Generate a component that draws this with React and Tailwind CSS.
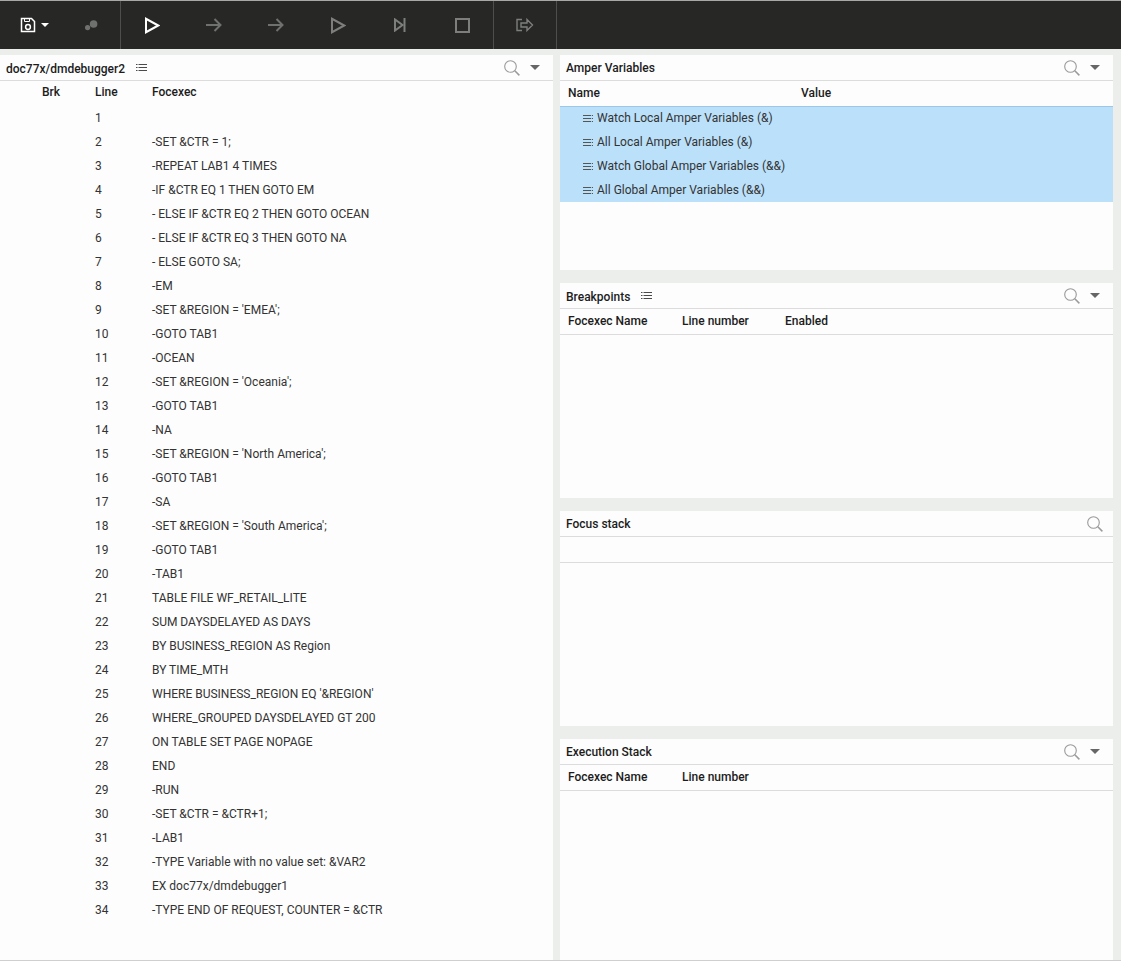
const CODE_LINES = [
  "",
  "-SET &CTR = 1;",
  "-REPEAT LAB1 4 TIMES",
  "-IF &CTR EQ 1 THEN GOTO EM",
  "- ELSE IF &CTR EQ 2 THEN GOTO OCEAN",
  "- ELSE IF &CTR EQ 3 THEN GOTO NA",
  "- ELSE GOTO SA;",
  "-EM",
  "-SET &REGION = 'EMEA';",
  "-GOTO TAB1",
  "-OCEAN",
  "-SET &REGION = 'Oceania';",
  "-GOTO TAB1",
  "-NA",
  "-SET &REGION = 'North America';",
  "-GOTO TAB1",
  "-SA",
  "-SET &REGION = 'South America';",
  "-GOTO TAB1",
  "-TAB1",
  "TABLE FILE WF_RETAIL_LITE",
  "SUM DAYSDELAYED AS DAYS",
  "BY BUSINESS_REGION AS Region",
  "BY TIME_MTH",
  "WHERE BUSINESS_REGION EQ '&REGION'",
  "WHERE_GROUPED DAYSDELAYED GT 200",
  "ON TABLE SET PAGE NOPAGE",
  "END",
  "-RUN",
  "-SET &CTR = &CTR+1;",
  "-LAB1",
  "-TYPE Variable with no value set: &VAR2",
  "EX doc77x/dmdebugger1",
  "-TYPE END OF REQUEST, COUNTER = &CTR",
];

const AMPER_ROWS = [
  "Watch Local Amper Variables (&)",
  "All Local Amper Variables (&)",
  "Watch Global Amper Variables (&&)",
  "All Global Amper Variables (&&)",
];

// ----- ICONS -----
function SaveIcon() {
  return (
    <svg width="16" height="16" viewBox="0 0 16 16" fill="none" stroke="#fff" strokeWidth="1.5">
      <path d="M1.5 1.5h10l3 3v10h-13z" />
      <path d="M4.5 1.5v3h5v-3" strokeWidth="1" />
      <circle cx="8" cy="10" r="2.4" />
    </svg>
  );
}

function DotsIcon() {
  return (
    <svg width="13" height="11" viewBox="0 0 13 11" fill="#6f716f">
      <circle cx="8.6" cy="4" r="3.8" />
      <circle cx="2.6" cy="7.6" r="2.6" />
    </svg>
  );
}

function PlayIcon({ color }) {
  return (
    <svg width="16" height="17" viewBox="0 0 16 17" fill="none" stroke={color} strokeWidth="2">
      <path d="M2 1.8v13.4L14.2 8.5z" strokeLinejoin="miter" />
    </svg>
  );
}

function ArrowIcon() {
  return (
    <svg width="16" height="14" viewBox="0 0 16 14" fill="none" stroke="#6f716f" strokeWidth="2">
      <path d="M0 7h14.5M8.5 1l6 6-6 6" />
    </svg>
  );
}

function StepEndIcon() {
  return (
    <svg width="12" height="14" viewBox="0 0 12 14" fill="none" stroke="#7d7f7d" strokeWidth="2">
      <path d="M1 1.5v11L8.5 7z" />
      <path d="M10.5 0v14" />
    </svg>
  );
}

function StopIcon() {
  return (
    <svg width="15" height="15" viewBox="0 0 15 15" fill="none" stroke="#7d7f7d" strokeWidth="2">
      <rect x="1" y="1" width="13" height="13" />
    </svg>
  );
}

function ExitIcon() {
  return (
    <svg width="18" height="14" viewBox="0 0 18 14" fill="none" stroke="#7d7f7d" strokeWidth="1.4">
      <path d="M6 1.5H1v11h5" />
      <path d="M5 5h6V1.5L16.5 7 11 12.5V9H5z" />
    </svg>
  );
}

function ListIcon() {
  return (
    <svg width="11" height="7" viewBox="0 0 11 7" fill="#4a4a4a">
      <rect x="0" y="0" width="1.5" height="1" />
      <rect x="2.5" y="0" width="8.5" height="1" />
      <rect x="0" y="3" width="1.5" height="1" />
      <rect x="2.5" y="3" width="8.5" height="1" />
      <rect x="0" y="6" width="1.5" height="1" />
      <rect x="2.5" y="6" width="8.5" height="1" />
    </svg>
  );
}

function RowIcon() {
  return (
    <svg width="10" height="7" viewBox="0 0 10 7" fill="#555">
      <rect x="0" y="0" width="8" height="1" />
      <rect x="8.8" y="0" width="1.2" height="1" />
      <rect x="0" y="3" width="8" height="1" />
      <rect x="8.8" y="3" width="1.2" height="1" />
      <rect x="0" y="6" width="8" height="1" />
      <rect x="8.8" y="6" width="1.2" height="1" />
    </svg>
  );
}

function SearchIcon() {
  return (
    <svg width="16" height="16" viewBox="0 0 16 16" fill="none" stroke="#9a9a9a" strokeWidth="1.1">
      <circle cx="6.5" cy="6.5" r="5.8" />
      <path d="M10.8 10.8l4.6 4.6" strokeWidth="1.5" />
    </svg>
  );
}

function Caret() {
  return <div className="w-0 h-0 border-x-[5px] border-x-transparent border-t-[5px] border-t-[#666]" />;
}

// ----- PANEL PARTS -----
function PanelHeader({ title, list, caret = true, titleClass = "" }) {
  return (
    <div className="h-[26px] shrink-0 flex items-center pl-1.5 border-b border-[#dcdcdc]">
      <span className={`${titleClass} text-xs font-medium text-[#1c1c1c]`}>{title}</span>
      {list && <span className="ml-[11px] flex"><ListIcon /></span>}
      <div className="ml-auto flex items-center">
        <SearchIcon />
        {caret ? <span className="ml-[10px] mr-[13px]"><Caret /></span> : <span className="w-[10px]" />}
      </div>
    </div>
  );
}

function ColumnHeader({ children, className = "border-b border-[#dcdcdc] pb-0.5" }) {
  return (
    <div className={`${className} h-[26px] shrink-0 flex items-center text-xs font-medium text-[#1c1c1c]`}>
      {children}
    </div>
  );
}

function ToolButton({ children, width = "w-[62px]" }) {
  return <div className={`${width} h-full flex items-center justify-center`}>{children}</div>;
}

export default function App() {
  return (
    <div className="h-[966px] bg-white font-['Roboto',sans-serif] flex flex-col overflow-hidden">

      {/* Toolbar */}
      <div className="h-[49px] shrink-0 bg-[#272825] border-t border-[#a8a8a8] flex">
        <div className="w-[121px] h-full border-r border-[#4e4f4d] flex items-center">
          <span className="ml-[20px] flex"><SaveIcon /></span>
          <div className="ml-[5px] w-0 h-0 border-x-[4px] border-x-transparent border-t-[4px] border-t-white" />
          <span className="ml-[36px] flex"><DotsIcon /></span>
        </div>
        <div className="w-[373px] h-full border-r border-[#4e4f4d] flex">
          <ToolButton><PlayIcon color="#ffffff" /></ToolButton>
          <ToolButton><ArrowIcon /></ToolButton>
          <ToolButton><ArrowIcon /></ToolButton>
          <ToolButton><PlayIcon color="#7d7f7d" /></ToolButton>
          <ToolButton><StepEndIcon /></ToolButton>
          <ToolButton><StopIcon /></ToolButton>
        </div>
        <div className="w-[63px] h-full border-r border-[#4e4f4d] flex items-center justify-center">
          <ExitIcon />
        </div>
      </div>

      {/* Main area */}
      <div className="h-[912px] shrink-0 bg-[#eceeec] pt-1.5 flex border-b border-[#cfcfcf]">

        {/* Focexec panel */}
        <div className="w-[553px] h-full bg-[#fdfdfd] flex flex-col">
          <PanelHeader title="doc77x/dmdebugger2" list titleClass="mt-0.5" />
          <ColumnHeader className="pb-1">
            <div className="w-[42px]" />
            <div className="w-[53px]">Brk</div>
            <div className="w-[57px]">Line</div>
            <div>Focexec</div>
          </ColumnHeader>
          <div className="flex flex-col text-xs text-[#333]">
            {CODE_LINES.map((text, i) => (
              <div key={i} className="h-6 pb-0.5 flex items-center">
                <div className="w-[95px] shrink-0" />
                <div className="w-[57px] shrink-0">{i + 1}</div>
                <div>{text}</div>
              </div>
            ))}
          </div>
        </div>

        {/* Right column */}
        <div className="w-[553px] ml-[7px] h-full flex flex-col gap-[13px]">

          <div className="h-[215px] shrink-0 bg-[#fdfdfd] flex flex-col">
            <PanelHeader title="Amper Variables" />
            <ColumnHeader>
              <div className="w-[241px] pl-2">Name</div>
              <div>Value</div>
            </ColumnHeader>
            <div className="h-24 overflow-hidden bg-[#bbe0fa] border-t border-[#9cc7e8] -mt-px text-xs text-[#333]">
              {AMPER_ROWS.map((row) => (
                <div key={row} className="h-6 pb-0.5 flex items-center pl-[23px]">
                  <span className="mr-1 flex"><RowIcon /></span>
                  <span>{row}</span>
                </div>
              ))}
            </div>
          </div>

          <div className="h-[215px] shrink-0 bg-[#fdfdfd] flex flex-col">
            <PanelHeader title="Breakpoints" list titleClass="mt-0.5" />
            <ColumnHeader>
              <div className="w-[122px] pl-2">Focexec Name</div>
              <div className="w-[103px]">Line number</div>
              <div>Enabled</div>
            </ColumnHeader>
          </div>

          <div className="h-[215px] shrink-0 bg-[#fdfdfd] flex flex-col">
            <PanelHeader title="Focus stack" caret={false} />
            <ColumnHeader />
          </div>

          <div className="flex-1 bg-[#fdfdfd] flex flex-col">
            <PanelHeader title="Execution Stack" />
            <ColumnHeader>
              <div className="w-[122px] pl-2">Focexec Name</div>
              <div>Line number</div>
            </ColumnHeader>
          </div>
        </div>
      </div>
    </div>
  );
}
